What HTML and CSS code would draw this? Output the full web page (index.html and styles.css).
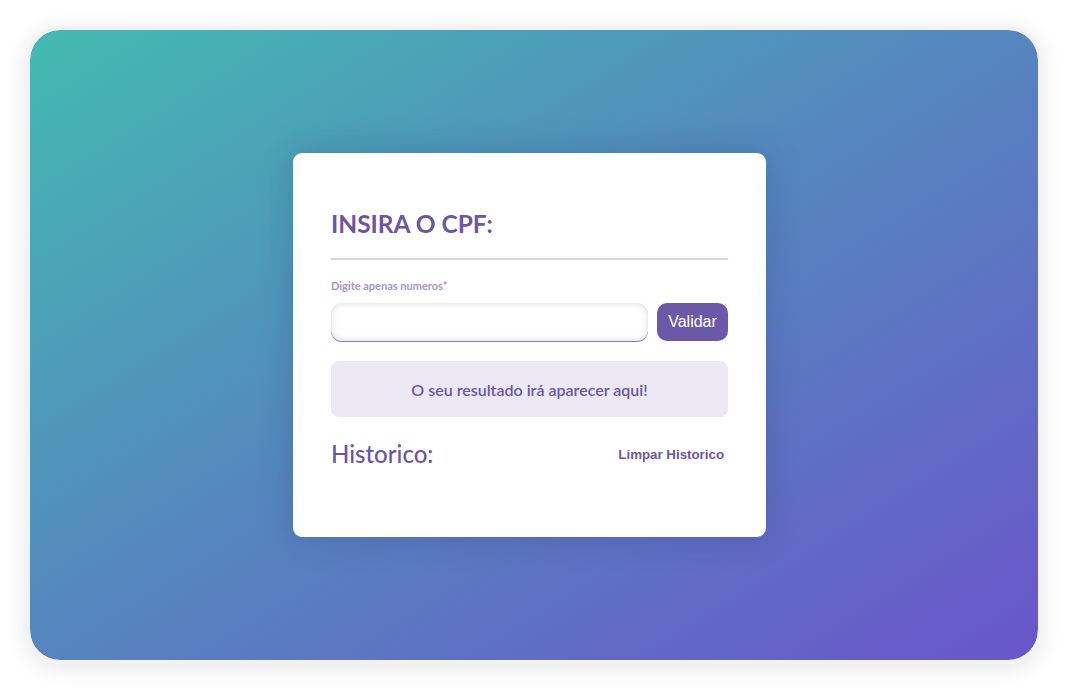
FILE: index.html
```html
<!DOCTYPE html>
<html lang="pt-BR">
<head>
<meta charset="utf-8">
<title>Validador de CPF</title>
<link rel="stylesheet" href="styles.css">
</head>
<body>
<div class="frame">
  <main class="stage">
    <section class="card">
      <h1 class="title">INSIRA O CPF:</h1>
      <hr class="divider">
      <label class="hint" for="cpf">Digite apenas numeros*</label>
      <div class="form-row">
        <input class="cpf-input" id="cpf" type="text">
        <button class="btn-validate" type="button">Validar</button>
      </div>
      <div class="result">O seu resultado irá aparecer aqui!</div>
      <div class="history-head">
        <h2 class="history-title">Historico:</h2>
        <button class="btn-clear" type="button">Limpar Historico</button>
      </div>
    </section>
  </main>
</div>
</body>
</html>
```

FILE: styles.css
```css
* { box-sizing: border-box; }
html, body { margin: 0; padding: 0; background: #ffffff; }
body {
  width: 1076px;
  height: 698px;
  overflow: hidden;
  font-family: Lato, "Open Sans", sans-serif;
}
.frame {
  padding: 26px 34px 34px 26px;
  height: 100%;
}
.stage {
  height: 100%;
  border: 4px solid #f2f2f2;
  border-radius: 34px;
  box-shadow: 0 4px 22px rgba(0, 0, 0, 0.10);
  background: linear-gradient(to bottom right, #43bab1 0%, #5685bf 50%, #6a55cb 100%);
  background-clip: padding-box;
  display: flex;
  align-items: center;
  justify-content: center;
}
.card {
  width: 473px;
  height: 384px;
  margin-right: 9px;
  background: #ffffff;
  border-radius: 9px;
  box-shadow: 0 0 34px rgba(30, 40, 90, 0.22);
  padding: 56px 38px 38px 38px;
  display: flex;
  flex-direction: column;
}
.title {
  margin: 0;
  font-size: 24.5px;
  line-height: 29px;
  font-weight: 700;
  color: #6a56a6;
}
.divider {
  margin: 20px 0 0 0;
  border: none;
  height: 2px;
  background: #d9d4ea;
}
.hint {
  margin-top: 19px;
  font-size: 11px;
  line-height: 13px;
  font-weight: 700;
  color: #a595cc;
}
.form-row {
  margin-top: 11px;
  display: flex;
  gap: 9px;
  height: 38px;
}
.cpf-input {
  flex: 1;
  height: 38px;
  border: none;
  border-radius: 11px;
  background: #ffffff;
  box-shadow: inset 0 0 7px rgba(0, 0, 0, 0.16), 0 1px 0 #8b7bc3;
  outline: none;
}
.btn-validate {
  height: 38px;
  width: 71px;
  border: none;
  border-radius: 10px;
  background: #6b58a6;
  color: #ffffff;
  font-family: "Liberation Sans", Arial, sans-serif;
  font-size: 16px;
  padding: 0;
}
.result {
  margin-top: 20px;
  height: 56px;
  border-radius: 8px;
  background: #ece9f5;
  color: #6a56a6;
  font-size: 16px;
  font-weight: 600;
  display: flex;
  align-items: center;
  justify-content: center;
}
.history-head {
  margin-top: 22px;
  display: flex;
  justify-content: space-between;
  align-items: flex-start;
}
.history-title {
  margin: 0;
  font-size: 24px;
  line-height: 29px;
  font-weight: 500;
  color: #6a56a6;
}
.btn-clear {
  border: none;
  background: none;
  padding: 0;
  margin: 8px 4px 0 0;
  font-family: "Liberation Sans", Arial, sans-serif;
  font-size: 13.3px;
  font-weight: 700;
  color: #6a56a6;
}
```
